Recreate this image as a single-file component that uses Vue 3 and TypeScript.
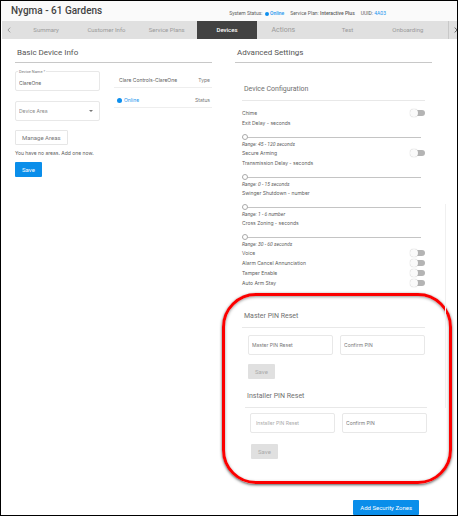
<script setup lang="ts">
import { ref } from 'vue'

interface Toggle { kind: 'toggle'; id: string; label: string; on: boolean }
interface Range { kind: 'range'; id: string; label: string; min: number; max: number; unit: string; value: number }
interface PinForm { id: string; title: string; confirm: string; muted: boolean }

const tabs = ['Summary', 'Customer Info', 'Service Plans', 'Devices', 'Actions', 'Test', 'Onboarding']
const active = ref('Devices')
const deviceName = ref('ClareOne')

const settings = ref<(Toggle | Range)[]>([
  { kind: 'toggle', id: 'chime', label: 'Chime', on: false },
  { kind: 'range', id: 'exit', label: 'Exit Delay - seconds', min: 45, max: 120, unit: 'seconds', value: 45 },
  { kind: 'toggle', id: 'secure', label: 'Secure Arming', on: false },
  { kind: 'range', id: 'transmission', label: 'Transmission Delay - seconds', min: 0, max: 15, unit: 'seconds', value: 0 },
  { kind: 'range', id: 'swinger', label: 'Swinger Shutdown - number', min: 1, max: 6, unit: 'number', value: 1 },
  { kind: 'range', id: 'cross', label: 'Cross Zoning - seconds', min: 30, max: 60, unit: 'seconds', value: 30 },
  { kind: 'toggle', id: 'voice', label: 'Voice', on: false },
  { kind: 'toggle', id: 'alarm', label: 'Alarm Cancel Annunciation', on: false },
  { kind: 'toggle', id: 'tamper', label: 'Tamper Enable', on: false },
  { kind: 'toggle', id: 'autoarm', label: 'Auto Arm Stay', on: false },
])

const pinForms: PinForm[] = [
  { id: 'master', title: 'Master PIN Reset', confirm: 'Confirm PIN', muted: false },
  { id: 'installer', title: 'Installer PIN Reset', confirm: 'Confirm PIN', muted: true },
]
</script>

<template>
  <div class="page">
    <header class="top">
      <h1>Nygma - 61 Gardens</h1>
      <div class="meta">
        <span>System Status: <i class="dot"></i> <b class="blue">Online</b></span>
        <span>Service Plan: <b>Interactive Plus</b></span>
        <span>UUID: <a href="#" class="blue">4A03</a></span>
      </div>
    </header>

    <nav class="tabs">
      <button class="arrow" aria-label="Previous tabs">
        <svg viewBox="0 0 4 6"><path d="M3.2 0.6 0.9 3l2.3 2.4" /></svg>
      </button>
      <button
        v-for="tab in tabs"
        :key="tab"
        class="tab"
        :class="{ active: tab === active, large: tab === 'Actions' }"
        @click="active = tab"
      >{{ tab }}</button>
      <button class="arrow next" aria-label="Next tabs">
        <svg viewBox="0 0 4 6"><path d="M0.8 0.6 3.1 3 0.8 5.4" /></svg>
      </button>
    </nav>

    <main class="columns">
      <section>
        <h2>Basic Device Info</h2>
        <div class="basic">
          <form class="device" @submit.prevent>
            <div class="field named">
              <label for="device-name">Device Name *</label>
              <input id="device-name" v-model="deviceName" type="text" />
            </div>
            <div class="field">
              <select id="device-area" aria-label="Device Area">
                <option>Device Area</option>
              </select>
              <svg class="caret" viewBox="0 0 4 2"><path d="M0 0h4L2 2z" /></svg>
            </div>
            <button type="button" class="btn outline">Manage Areas</button>
            <p>You have no areas. Add one now.</p>
            <button type="submit" class="btn primary">Save</button>
          </form>
          <dl class="facts">
            <div><dd>Clare Controls-ClareOne</dd><dt>Type</dt></div>
            <div><dd class="blue"><i class="dot"></i>Online</dd><dt>Status</dt></div>
          </dl>
        </div>
      </section>

      <section>
        <h2>Advanced Settings</h2>
        <div class="config">
          <h3>Device Configuration</h3>
          <div class="settings">
            <template v-for="s in settings" :key="s.id">
              <div v-if="s.kind === 'toggle'" class="toggle">
                <label :for="s.id">{{ s.label }}</label>
                <input :id="s.id" v-model="s.on" type="checkbox" role="switch" />
              </div>
              <div v-else class="range">
                <label :for="s.id">{{ s.label }}</label>
                <input :id="s.id" v-model.number="s.value" type="range" :min="s.min" :max="s.max" />
                <em>Range: {{ s.min }} - {{ s.max }} {{ s.unit }}</em>
              </div>
            </template>
          </div>
        </div>

        <div class="pins">
          <form v-for="f in pinForms" :key="f.id" class="pin" :class="{ muted: f.muted }" @submit.prevent>
            <h3>{{ f.title }}</h3>
            <div class="pair">
              <div class="field"><input type="password" :aria-label="f.title" :placeholder="f.title" /></div>
              <div class="field"><input type="password" :aria-label="f.confirm" :placeholder="f.confirm" /></div>
            </div>
            <button type="submit" class="btn disabled" disabled>Save</button>
          </form>
        </div>

        <div class="actions">
          <button class="btn primary">Add Security Zones</button>
        </div>
      </section>
    </main>
  </div>
</template>

<style>
body {
  background: #fff;
}
</style>

<style scoped>
* {
  box-sizing: border-box;
  margin: 0;
}
.page {
  position: relative;
  min-height: 100vh;
  display: flex;
  flex-direction: column;
  border: 1px solid #000;
  background: #fff;
  color: #5c5c5c;
  font: 6px/10px Roboto, sans-serif;
}
.page::after {
  content: '';
  position: absolute;
  top: 203px;
  right: 11px;
  width: 1px;
  height: 204px;
  background: #f0f0f0;
}
button,
input,
select {
  font: inherit;
  color: inherit;
  border: 0;
  padding: 0;
  background: none;
}
.field input,
.field select,
.device p,
.facts,
.settings label {
  font-family: Inter, Roboto, sans-serif;
  font-size: 5px;
}
.blue {
  color: #1a94ee;
  text-decoration: none;
}
.dot {
  display: inline-block;
  width: 5px;
  height: 5px;
  border-radius: 50%;
  background: #0d8fee;
}
.top {
  display: flex;
  align-items: center;
  height: 20px;
  padding: 0 71px 0 10px;
  justify-content: space-between;
  background: #fafafa;
}
h1 {
  font-size: 10px;
  font-weight: 500;
  color: #444;
  white-space: nowrap;
}
.meta {
  display: flex;
  gap: 6px;
  padding-top: 4px;
  font-size: 5px;
  white-space: nowrap;
}
.meta b {
  font-weight: 500;
}
.meta .dot {
  width: 4px;
  height: 4px;
  margin-left: 1px;
  vertical-align: -1px;
}
.tabs {
  display: grid;
  grid-template-columns: 14px repeat(7, minmax(0, 1fr)) 19px;
  height: 18px;
  margin-left: 1px;
  background: #e0e0e0;
}
.tab {
  color: #9a9a9a;
  text-align: center;
  white-space: nowrap;
}
.tab.large {
  font-size: 7px;
  padding-right: 8px;
}
.tab.active {
  background: #424242;
  color: #fff;
  font-weight: 500;
}
.arrow svg {
  display: block;
  width: 4px;
  height: 6px;
  margin-left: 5px;
  fill: none;
  stroke: #888;
  stroke-width: 0.8;
}
.arrow.next {
  margin-left: 10px;
  border-left: 1px solid #c8c8c8;
}
.arrow.next svg {
  stroke: #333;
}
.columns {
  display: grid;
  grid-template-columns: 1fr 1fr;
  gap: 23px;
  flex: 1;
  padding: 6px 25px 0 14px;
}
.columns > section {
  display: flex;
  flex-direction: column;
  min-width: 0;
}
h2 {
  padding: 3px 2px 4px;
  border-bottom: 1px solid #c8c8c8;
  font-size: 8px;
  font-weight: 400;
  color: #555;
}
h3 {
  padding: 0 2px 6px;
  border-bottom: 1px solid #e8e8e8;
  font-size: 7px;
  font-weight: 400;
  color: #707070;
}
.basic {
  display: grid;
  grid-template-columns: minmax(0, 85fr) minmax(0, 98fr);
  gap: 14px;
  padding-top: 8px;
}
.device {
  display: flex;
  flex-direction: column;
  align-items: flex-start;
}
.field {
  position: relative;
  width: 100%;
  height: 20px;
  border: 1px solid #e8e8e8;
  border-radius: 2px;
}
.field + .field {
  margin-top: 10px;
}
.field input,
.field select {
  display: block;
  width: 100%;
  height: 18px;
  padding: 0 3px;
  appearance: none;
  outline: 0;
}
.field select {
  color: #888;
}
.named label {
  position: absolute;
  top: -3px;
  left: 2px;
  padding: 0 1px;
  background: #fff;
  font-size: 4px;
  line-height: 5px;
  color: #777;
}
.field.named input {
  padding-top: 3px;
}
.caret {
  position: absolute;
  top: 8px;
  right: 6px;
  width: 4px;
  height: 2px;
  fill: #777;
}
.btn {
  height: 15px;
  padding: 0 7px;
  border-radius: 1px;
  white-space: nowrap;
}
.outline {
  margin: 9px 0 3px;
  border: 1px solid #e6e6e6;
  padding: 0 6px;
  color: #777;
}
.device p {
  margin-bottom: 4px;
  white-space: nowrap;
}
.primary {
  background: #0a8eea;
  color: #fff;
}
.facts div {
  display: flex;
  align-items: center;
  justify-content: space-between;
  height: 20px;
  padding: 8px 2px 3px 5px;
  border-bottom: 1px solid #eee;
  line-height: 6px;
}
.facts div:first-child {
  height: 17px;
  padding-top: 4px;
}
.facts dt {
  color: #777;
}
.facts .blue {
  margin-left: -2px;
}
.facts .dot {
  margin-right: 2px;
  vertical-align: -1px;
}
.config {
  padding: 21px 7px 0;
}
.settings {
  padding-top: 7px;
}
.toggle {
  display: flex;
  align-items: center;
  justify-content: space-between;
  height: 10px;
}
.toggle input {
  position: relative;
  appearance: none;
  width: 15px;
  height: 8px;
}
.toggle input::before {
  content: '';
  position: absolute;
  inset: 1px 0 1px 3px;
  border-radius: 3px;
  background: #b4b4b4;
}
.toggle input::after {
  content: '';
  position: absolute;
  top: 0;
  left: 0;
  width: 8px;
  height: 8px;
  border-radius: 50%;
  background: #fafafa;
  box-shadow: 0 0 1px #aaa;
}
.toggle input:checked::after {
  left: 7px;
}
.range {
  display: flex;
  flex-direction: column;
  height: 30px;
}
.range input {
  appearance: none;
  height: 8px;
  margin: 5px 4px 0 0;
  background: linear-gradient(#c4c4c4, #c4c4c4) center / 100% 1px no-repeat;
}
.range input::-webkit-slider-thumb {
  appearance: none;
  width: 6px;
  height: 6px;
  border: 1px solid #aaa;
  border-radius: 50%;
  background: #fff;
}
.range em {
  font-size: 5px;
  line-height: 7px;
}
.pins {
  margin: 5px -20px 0 -13px;
  padding: 15px 24px 22px 17px;
  border: 3px solid #fb0000;
  border-radius: 34px;
  box-shadow: 0 1px 3px #555, inset 0 1px 3px #999;
}
.pin .pair {
  display: grid;
  grid-template-columns: 1fr 1fr;
  gap: 7px;
  padding: 7px 0 9px 6px;
}
.pin .field + .field {
  margin-top: 0;
}
.pin input::placeholder {
  color: #777;
  opacity: 1;
}
.pin .btn {
  display: block;
  margin-left: 6px;
}
.disabled {
  background: #e0e0e0;
  color: #aaa;
}
.pin.muted {
  margin: 12px -2px 0 3px;
}
.pin.muted .pair {
  padding: 5px 0 11px 5px;
}
.pin.muted .field:first-child input {
  padding-left: 5px;
}
.pin.muted .field:first-child input::placeholder {
  color: #aaa;
}
.actions {
  display: flex;
  justify-content: flex-end;
  margin-top: auto;
  padding: 16px 13px 0 0;
}
</style>
